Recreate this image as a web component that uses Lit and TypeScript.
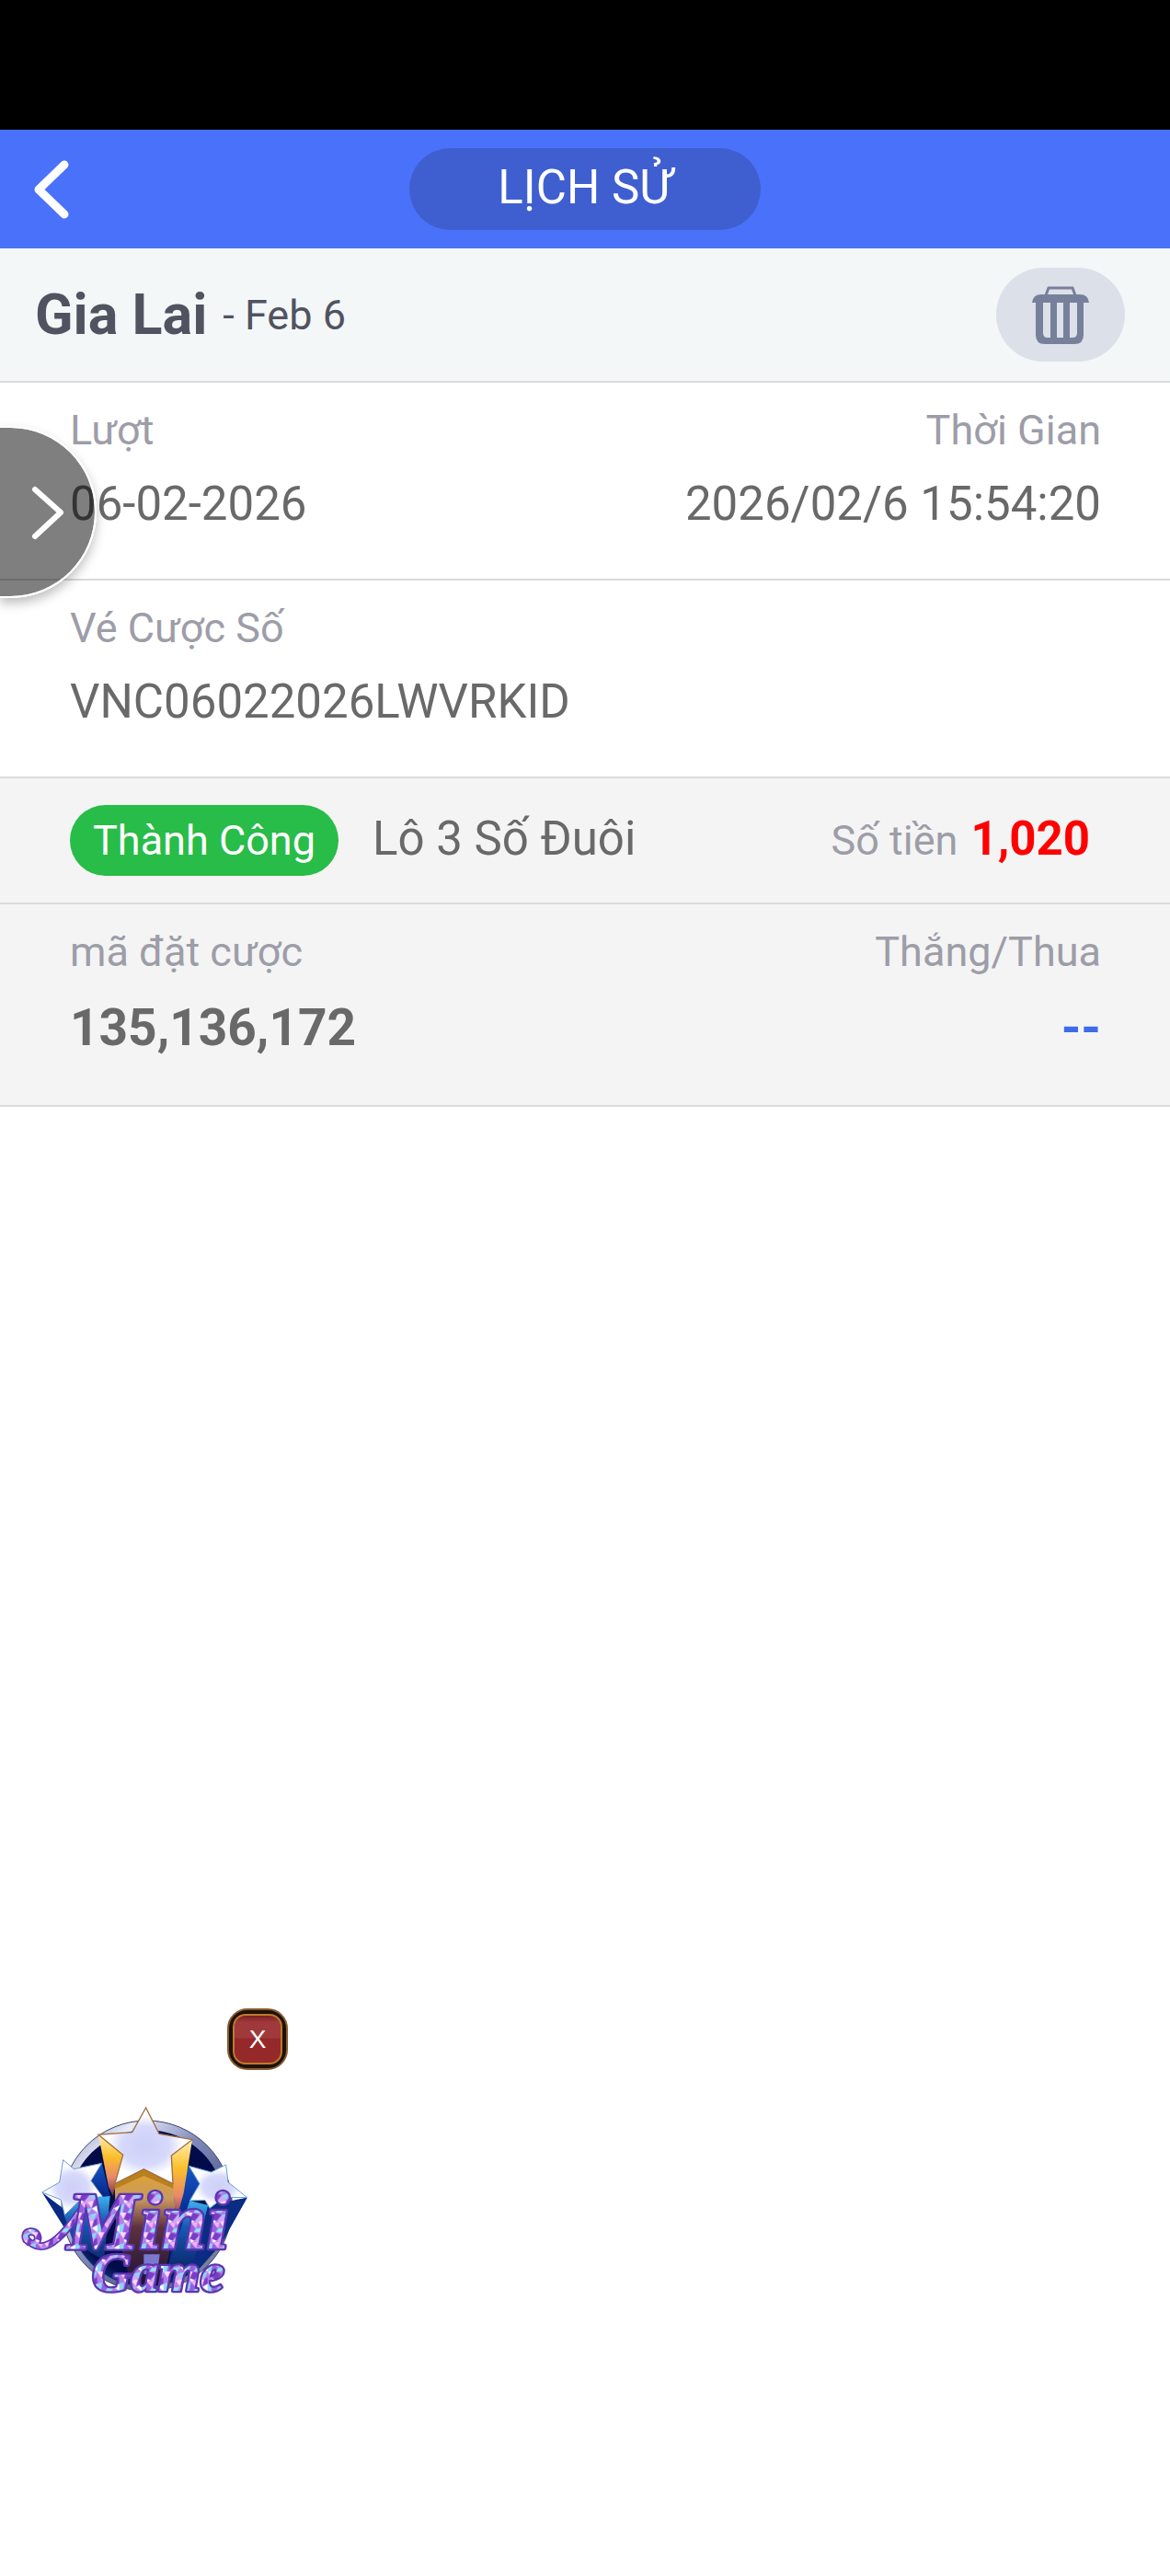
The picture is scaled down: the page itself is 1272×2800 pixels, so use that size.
import { css, html, LitElement, svg } from 'lit';
import { customElement, property } from 'lit/decorators.js';

@customElement('history-field')
export class HistoryField extends LitElement {
  @property({ type: String }) label = '';

  static styles = css`
    :host {
      display: flex;
      flex-direction: column;
      gap: 24px;
    }

    .label {
      color: #9d9da8;
      font-size: 45px;
      line-height: 52px;
    }

    .value {
      color: #696969;
      font-size: 51px;
      line-height: 60px;
    }
  `;

  render() {
    return html`
      <div class="label">${this.label}</div>
      <div class="value"><slot></slot></div>
    `;
  }
}

@customElement('mini-game')
export class MiniGame extends LitElement {
  static styles = css`
    :host {
      align-items: flex-start;
      display: flex;
      flex-direction: column;
      gap: 37px;
      width: 290px;
    }

    button {
      background: none;
      border: 0;
      cursor: pointer;
      font-family: inherit;
      padding: 0;
    }

    .close {
      align-self: flex-end;
      background: #1c1208;
      border: 2px solid #8a5a30;
      border-radius: 22px;
      box-sizing: border-box;
      height: 67px;
      padding: 4px;
      width: 66px;
    }

    .close-face {
      align-items: center;
      background: linear-gradient(#7c2024, #a0393c 14%, #a0393c 46%, #952829 50%);
      border: 2px solid #bd7a2c;
      border-radius: 14px;
      box-sizing: border-box;
      color: #fff;
      display: flex;
      font-family: 'Liberation Sans', sans-serif;
      font-size: 28px;
      height: 100%;
      justify-content: center;
      line-height: 32px;
    }

    .logo {
      display: block;
      height: 210px;
      overflow: visible;
      width: 250px;
    }

    .logo-text {
      fill: url(#facets);
      font-family: 'Liberation Serif', serif;
      font-style: italic;
      font-weight: 700;
      paint-order: stroke;
      stroke: #5b36b0;
      stroke-linejoin: round;
      stroke-width: 14px;
    }

    .mini {
      font-size: 264px;
    }

    .game {
      font-size: 176px;
    }
  `;

  renderDefs() {
    return svg`
      <defs>
        <linearGradient id="ring" x1="0" y1="0" x2="1" y2="1">
          <stop offset="0" stop-color="#7e87b4" />
          <stop offset="0.22" stop-color="#e9ecfa" />
          <stop offset="0.45" stop-color="#7f8abb" />
          <stop offset="0.75" stop-color="#4b557f" />
          <stop offset="1" stop-color="#c3c8dc" />
        </linearGradient>
        <radialGradient id="disc" cx="0.5" cy="0.45" r="0.6">
          <stop offset="0" stop-color="#07103c" />
          <stop offset="0.8" stop-color="#020b4b" />
          <stop offset="1" stop-color="#1b4595" />
        </radialGradient>
        <linearGradient id="gold" x1="0" y1="0" x2="0" y2="1">
          <stop offset="0" stop-color="#fff0b8" />
          <stop offset="0.35" stop-color="#fbc02a" />
          <stop offset="0.7" stop-color="#e9876a" />
          <stop offset="1" stop-color="#6b2f4e" />
        </linearGradient>
        <linearGradient id="column" x1="0" y1="0" x2="0" y2="1">
          <stop offset="0" stop-color="#e0a32f" />
          <stop offset="0.25" stop-color="#c99a60" />
          <stop offset="0.5" stop-color="#5c3140" />
          <stop offset="1" stop-color="#1c1238" />
        </linearGradient>
        <linearGradient id="blue" x1="0" y1="0" x2="0" y2="1">
          <stop offset="0" stop-color="#1656c4" />
          <stop offset="0.5" stop-color="#05258a" />
          <stop offset="1" stop-color="#0b2f7c" />
        </linearGradient>
        <linearGradient id="pillar" x1="0" y1="0" x2="0" y2="1">
          <stop offset="0" stop-color="#3fb0ee" />
          <stop offset="0.4" stop-color="#1559b4" />
          <stop offset="1" stop-color="#0c2a70" />
        </linearGradient>
        <radialGradient id="star">
          <stop offset="0" stop-color="#cdd0f8" />
          <stop offset="0.5" stop-color="#d6d9fa" />
          <stop offset="0.8" stop-color="#ffffff" />
        </radialGradient>
        <pattern id="facets" width="72" height="64" patternUnits="userSpaceOnUse">
          <rect width="72" height="64" fill="#b47be6" />
          <path d="M0 0 24 0 14 22Z M40 30 62 24 54 50Z" fill="#ffd6fb" />
          <path d="M24 0 46 8 30 28 14 22Z" fill="#7a3cc6" />
          <path d="M46 8 72 0 62 24Z M0 40 18 34 12 64 0 64Z" fill="#8ed6f8" />
          <path d="M14 22 30 28 18 34Z M54 50 72 40 72 64Z" fill="#ffffff" />
          <path d="M18 34 40 30 34 52Z" fill="#f0b4f6" />
          <path d="M34 52 54 50 46 64 26 64Z" fill="#8ee2f2" />
          <path d="M62 24 72 18 72 40 54 50Z" fill="#7a3cc6" />
          <path d="M12 64 18 34 34 52 26 64Z" fill="#9a5ce0" />
          <path d="M30 28 46 8 62 24 40 30Z" fill="#d0aaf8" />
        </pattern>
      </defs>
    `;
  }

  render() {
    return html`
      <button class="close" aria-label="Close">
        <span class="close-face">X</span>
      </button>
      <button class="game-link" aria-label="Mini Game">
        <svg class="logo" viewBox="40 350 750 630">
          ${this.renderDefs()}
          <circle cx="450" cy="682" r="278" fill="url(#ring)" stroke="#3c4468" stroke-width="3" />
          <circle cx="450" cy="690" r="256" fill="url(#disc)" />

          <!-- left star -->
          <path d="M303 543 330 650 250 760 180 752 108 638 190 700 238 665 308 650 268 600Z" fill="url(#blue)" />
          <path d="M180 712 238 660 330 650 310 860 210 800Z" fill="url(#pillar)" />
          <path
            d="M177 532 212 562 303 543 268 600 306 652 236 660 182 712 170 662 108 638 165 605Z"
            fill="url(#star)"
            stroke="#6f9bd0"
            stroke-width="3"
          />

          <!-- right star -->
          <path d="M587 552 622 610 590 665 640 690 777 655 690 810 610 900 520 880 560 620Z" fill="url(#blue)" />
          <path d="M590 665 650 680 600 880 520 880Z" fill="url(#pillar)" />
          <path d="M650 680 777 655 690 810 600 880Z" fill="#0b2c83" />
          <path
            d="M587 552 660 572 708 548 715 605 777 655 702 654 655 690 640 664 590 665 622 610Z"
            fill="url(#star)"
            stroke="#5fa2e0"
            stroke-width="3"
          />

          <!-- centre star -->
          <path d="M345 610 440 565 537 612 545 740 500 940 400 940 350 760Z" fill="url(#column)" />
          <path d="M292 450 372 516 346 612 340 650 325 620Z" fill="url(#gold)" />
          <path d="M598 466 530 518 535 612 545 730 570 640Z" fill="url(#gold)" />
          <path d="M346 612 440 562 535 612 537 626 440 584 343 628Z" fill="#b9801d" />
          <path
            d="M447 362 490 447 598 466 530 518 535 610 440 562 346 610 372 516 292 450 402 442Z"
            fill="url(#star)"
            stroke="#a07040"
            stroke-width="4"
          />
          <path d="M440 840H492L484 905H440Z" fill="#7b78cf" />

          <!-- flourish leading into the first letter -->
          <path
            d="M66 800C50 790 48 768 72 766C100 766 102 802 78 806C130 840 190 760 232 700"
            fill="none"
            stroke="#5b36b0"
            stroke-linecap="round"
            stroke-width="26"
          />
          <path
            d="M66 800C50 790 48 768 72 766C100 766 102 802 78 806C130 840 190 760 232 700"
            fill="none"
            stroke="url(#facets)"
            stroke-linecap="round"
            stroke-width="16"
          />
          <text class="logo-text mini" x="190" y="822">Mini</text>
          <text class="logo-text game" x="272" y="958">Game</text>
        </svg>
      </button>
    `;
  }
}

@customElement('app-root')
export class AppRoot extends LitElement {
  static styles = css`
    :host {
      background: #fff;
      display: block;
      font-family: Roboto, sans-serif;
      min-height: 100vh;
      overflow: hidden;
      position: relative;
    }

    h1,
    h2 {
      font-weight: 400;
      margin: 0;
    }

    button {
      border: 0;
      cursor: pointer;
      padding: 0;
    }

    svg {
      display: block;
    }

    .status-bar {
      background: #000;
      height: 141px;
    }

    .header {
      align-items: center;
      background: #4a71f9;
      display: grid;
      grid-template-columns: 1fr auto 1fr;
      height: 129px;
      padding: 0 36px;
    }

    .back {
      background: none;
      justify-self: start;
    }

    .header-title {
      background: #3f5fd0;
      border-radius: 45px;
      box-sizing: border-box;
      color: #fff;
      font-size: 51px;
      line-height: 60px;
      min-width: 382px;
      padding: 13px 92px 16px;
      text-align: center;
    }

    .region {
      align-items: center;
      background: #f3f7f8;
      border-bottom: 2px solid #d9dbdc;
      color: #505360;
      display: flex;
      gap: 17px;
      height: 144px;
      padding: 0 49px 0 38px;
    }

    .region-name {
      font-size: 61px;
      font-weight: 700;
    }

    .region-date {
      font-size: 45px;
    }

    .delete {
      align-items: center;
      background: #dce0e9;
      border-radius: 51px;
      display: flex;
      height: 102px;
      justify-content: center;
      margin-left: auto;
      width: 140px;
    }

    .row {
      border-bottom: 2px solid #dadada;
      display: flex;
      justify-content: space-between;
      padding: 26px 75px 51px 76px;
    }

    .shaded {
      background: #f4f4f4;
    }

    .end {
      text-align: right;
    }

    .total {
      display: block;
      font-size: 55px;
      font-weight: 700;
      line-height: 65px;
    }

    .result {
      color: #3d6bea;
    }

    .bet {
      align-items: baseline;
      justify-content: flex-start;
      padding: 29px 87px 29px 76px;
    }

    .badge {
      background: #28bc48;
      border-radius: 39px;
      color: #fff;
      font-size: 45px;
      line-height: 77px;
      padding: 0 25px;
    }

    .bet-type {
      color: #696969;
      font-size: 51px;
      line-height: 60px;
      margin-left: 37px;
    }

    .amount-label {
      color: #9d9da8;
      font-size: 45px;
      margin-left: auto;
    }

    .amount {
      color: #f00;
      font-size: 51px;
      font-weight: 700;
      line-height: 60px;
      margin-left: 14px;
    }

    .drawer {
      background: rgba(0, 0, 0, 0.5);
      background-clip: padding-box;
      border: 2px solid #fff;
      border-left: 0;
      border-radius: 0 94px 94px 0;
      box-shadow: 0 6px 12px rgba(0, 0, 0, 0.25);
      box-sizing: border-box;
      height: 187px;
      left: 0;
      padding-left: 34px;
      position: absolute;
      top: 463px;
      width: 105px;
    }

    .mini-game {
      bottom: 303px;
      left: 23px;
      position: absolute;
    }
  `;

  render() {
    return html`
      <div class="status-bar"></div>

      <header class="header">
        <button class="back" aria-label="Back">
          <svg width="40" height="64" viewBox="0 0 40 64">
            <path
              d="M34 5 6 32 34 59"
              fill="none"
              stroke="#fff"
              stroke-linecap="round"
              stroke-linejoin="round"
              stroke-width="9"
            />
          </svg>
        </button>
        <h1 class="header-title">LỊCH SỬ</h1>
      </header>

      <section class="region">
        <h2 class="region-name">Gia Lai</h2>
        <span class="region-date">- Feb 6</span>
        <button class="delete" aria-label="Delete">
          <svg width="62" height="63" viewBox="0 0 62 63">
            <path d="M15 10 18 2H44L47 10" fill="none" stroke="#77809b" stroke-width="3" />
            <path
              d="M0 18Q1 9 10 9H52Q61 9 62 18H56V53Q56 63 46 63H14Q4 63 4 53V18ZM12 18V51Q12 56 17 56H20V18ZM27 18V56H34V18ZM41 18V56H44Q49 56 49 51V18Z"
              fill="#77809b"
              fill-rule="evenodd"
            />
          </svg>
        </button>
      </section>

      <main>
        <section class="row">
          <history-field label="Lượt">06-02-2026</history-field>
          <history-field class="end" label="Thời Gian">2026/02/6 15:54:20</history-field>
        </section>
        <section class="row">
          <history-field label="Vé Cược Số">VNC06022026LWVRKID</history-field>
        </section>
        <section class="row bet shaded">
          <span class="badge">Thành Công</span>
          <span class="bet-type">Lô 3 Số Đuôi</span>
          <span class="amount-label">Số tiền</span>
          <strong class="amount">1,020</strong>
        </section>
        <section class="row shaded">
          <history-field label="mã đặt cược">
            <strong class="total">135,136,172</strong>
          </history-field>
          <history-field class="end" label="Thắng/Thua">
            <strong class="total result">--</strong>
          </history-field>
        </section>
      </main>

      <button class="drawer" aria-label="Open menu">
        <svg width="36" height="60" viewBox="0 0 36 60">
          <path
            d="M4 5 32 30 4 56"
            fill="none"
            stroke="#fff"
            stroke-linecap="round"
            stroke-linejoin="round"
            stroke-width="6"
          />
        </svg>
      </button>

      <mini-game class="mini-game"></mini-game>
    `;
  }
}
